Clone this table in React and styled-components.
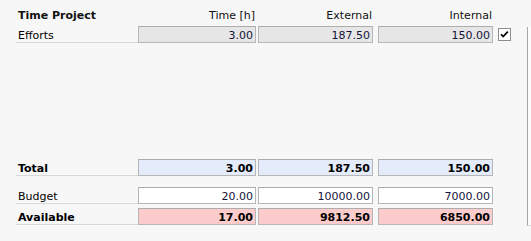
import React from "react";
import styled, { createGlobalStyle } from "styled-components";

const GlobalStyle = createGlobalStyle`
  html, body {
    margin: 0;
    padding: 0;
    background: #f7f7f7;
  }
  body {
    font-family: "DejaVu Sans", Verdana, sans-serif;
    font-size: 11px;
    color: #111;
  }
`;

const Page = styled.div`
  display: flex;
  width: 531px;
  height: 241px;
  overflow: hidden;
  background: #f7f7f7;
`;

const Main = styled.div`
  width: 511px;
  padding-left: 16px;
  display: flex;
  flex-direction: column;
  flex-shrink: 0;
`;

const SidePanel = styled.div`
  flex: 1;
  margin-top: 27px;
  height: 198px;
  border-left: 1px solid #a6a6a6;
  border-bottom: 1px solid #dcdcdc;
  background: #fcfcfc;
`;

const Row = styled.div`
  display: grid;
  grid-template-columns: 122px 120px 120px 120px 13px;
  align-items: center;
  height: ${(p) => p.$h || 17}px;
  margin-top: ${(p) => p.$top || 0}px;
`;

const HeadCell = styled.div`
  align-self: start;
  padding-top: 9px;
  line-height: 13px;
  font-weight: ${(p) => (p.$bold ? 700 : 400)};
  text-align: ${(p) => (p.$right ? "right" : "left")};
  padding-left: ${(p) => (p.$right ? 0 : 2)}px;
  width: ${(p) => p.$w || "auto"};
  box-sizing: border-box;
  padding-right: ${(p) => (p.$right ? 1 : 0)}px;
  color: #111;
`;

const Label = styled.div`
  height: 17px;
  box-sizing: border-box;
  display: flex;
  align-items: center;
  padding: 2px 0 0 2px;
  border-bottom: 1px solid #d8d8d8;
  font-weight: ${(p) => (p.$bold ? 700 : 400)};
  color: #000;
`;

const tones = {
  gray: "#e6e6e6",
  blue: "#e4ecfb",
  white: "#ffffff",
  pink: "#fccccc",
};

const Field = styled.div`
  width: ${(p) => (p.$wide ? 118 : 115)}px;
  height: 17px;
  box-sizing: border-box;
  display: flex;
  align-items: center;
  justify-content: flex-end;
  padding: 2px 2px 0 2px;
  background: ${(p) => tones[p.$tone]};
  border: 1px solid #b6b6b6;
  border-top-color: #adadad;
  font-weight: ${(p) => (p.$bold ? 700 : 400)};
  color: ${(p) => (p.$bold ? "#000" : "#14143a")};
`;

const Check = styled.span`
  display: block;
  width: 13px;
  height: 13px;
`;

const Spacer = styled.div`
  height: ${(p) => p.$h}px;
`;

const CheckMark = () => (
  <Check>
    <svg width="13" height="13" viewBox="0 0 13 13">
      <rect x="0.5" y="0.5" width="12" height="12" fill="#fff" stroke="#8e8e8e" />
      <polyline
        points="3,6.2 5.2,8.6 9.8,3.6"
        fill="none"
        stroke="#000"
        strokeWidth="1.7"
      />
    </svg>
  </Check>
);

const ValueRow = ({ label, bold, tone, values, top, check }) => (
  <Row $top={top}>
    <Label $bold={bold}>{label}</Label>
    <Field $wide $tone={tone} $bold={bold}>
      {values[0]}
    </Field>
    <Field $tone={tone} $bold={bold}>
      {values[1]}
    </Field>
    <Field $tone={tone} $bold={bold}>
      {values[2]}
    </Field>
    {check ? <CheckMark /> : <span />}
  </Row>
);

export default function App() {
  return (
    <>
      <GlobalStyle />
      <Page>
        <Main>
          <Row $h={26}>
            <HeadCell $bold>Time Project</HeadCell>
            <HeadCell $right $w="118px">Time [h]</HeadCell>
            <HeadCell $right $w="115px">External</HeadCell>
            <HeadCell $right $w="115px">Internal</HeadCell>
            <span />
          </Row>
          <ValueRow
            label="Efforts"
            tone="gray"
            values={["3.00", "187.50", "150.00"]}
            check
          />
          <Spacer $h={116} />
          <ValueRow
            label="Total"
            bold
            tone="blue"
            values={["3.00", "187.50", "150.00"]}
          />
          <ValueRow
            label="Budget"
            tone="white"
            top={11}
            values={["20.00", "10000.00", "7000.00"]}
          />
          <ValueRow
            label="Available"
            bold
            tone="pink"
            top={4}
            values={["17.00", "9812.50", "6850.00"]}
          />
        </Main>
        <SidePanel />
      </Page>
    </>
  );
}
